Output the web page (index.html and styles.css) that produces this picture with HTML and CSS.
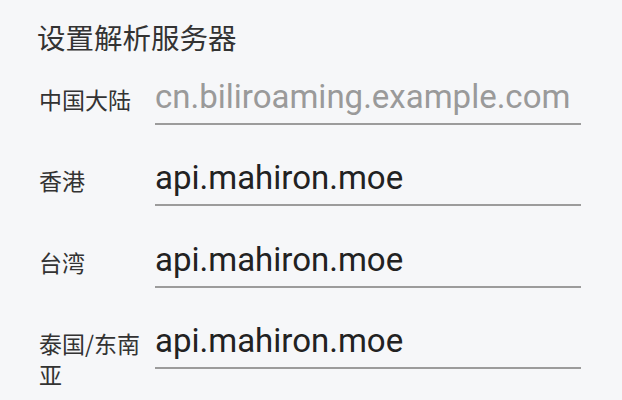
FILE: index.html
```html
<!DOCTYPE html>
<html lang="zh-CN">
<head>
<meta charset="utf-8">
<title>设置解析服务器</title>
<link rel="stylesheet" href="styles.css">
</head>
<body>
<div class="dialog">
  <h1 class="title">设置解析服务器</h1>
  <div class="form">
    <div class="row">
      <label class="label" for="cn">中国大陆</label>
      <input class="field" id="cn" type="text" placeholder="cn.biliroaming.example.com">
    </div>
    <div class="row">
      <label class="label" for="hk">香港</label>
      <input class="field" id="hk" type="text" value="api.mahiron.moe">
    </div>
    <div class="row">
      <label class="label" for="tw">台湾</label>
      <input class="field" id="tw" type="text" value="api.mahiron.moe">
    </div>
    <div class="row">
      <label class="label" for="th">泰国/东南亚</label>
      <input class="field" id="th" type="text" value="api.mahiron.moe">
    </div>
  </div>
</div>
</body>
</html>
```

FILE: styles.css
```css
html, body {
  margin: 0;
  padding: 0;
  background: #f6f7f9;
}

body {
  width: 622px;
  height: 400px;
  overflow: hidden;
  font-family: Roboto, "Noto Sans CJK SC", sans-serif;
}

.dialog {
  padding: 17px 41px 0 37px;
}

.title {
  margin: 0;
  font-family: "Noto Sans CJK SC", sans-serif;
  font-size: 28.5px;
  line-height: 40px;
  font-weight: 400;
  color: #333333;
}

.form {
  margin-top: 19px;
  display: flex;
  flex-direction: column;
}

.row {
  display: flex;
  align-items: flex-start;
  gap: 6px;
  height: 81.33px;
}

.label {
  flex: 0 0 110px;
  width: 110px;
  padding-top: 8px;
  padding-left: 2px;
  font-family: "Noto Sans CJK SC", sans-serif;
  font-size: 23px;
  line-height: 31px;
  color: #333333;
}

.field {
  flex: 1 1 auto;
  min-width: 0;
  box-sizing: content-box;
  height: 41px;
  line-height: 41px;
  padding: 0 0 6px 0;
  margin: 0;
  border: none;
  border-bottom: 2px solid #9c9c9c;
  background: transparent;
  outline: none;
  font-family: Roboto, sans-serif;
  font-size: 33px;
  color: #222222;
}

.field::placeholder {
  color: #9a9a9a;
  opacity: 1;
}
```
